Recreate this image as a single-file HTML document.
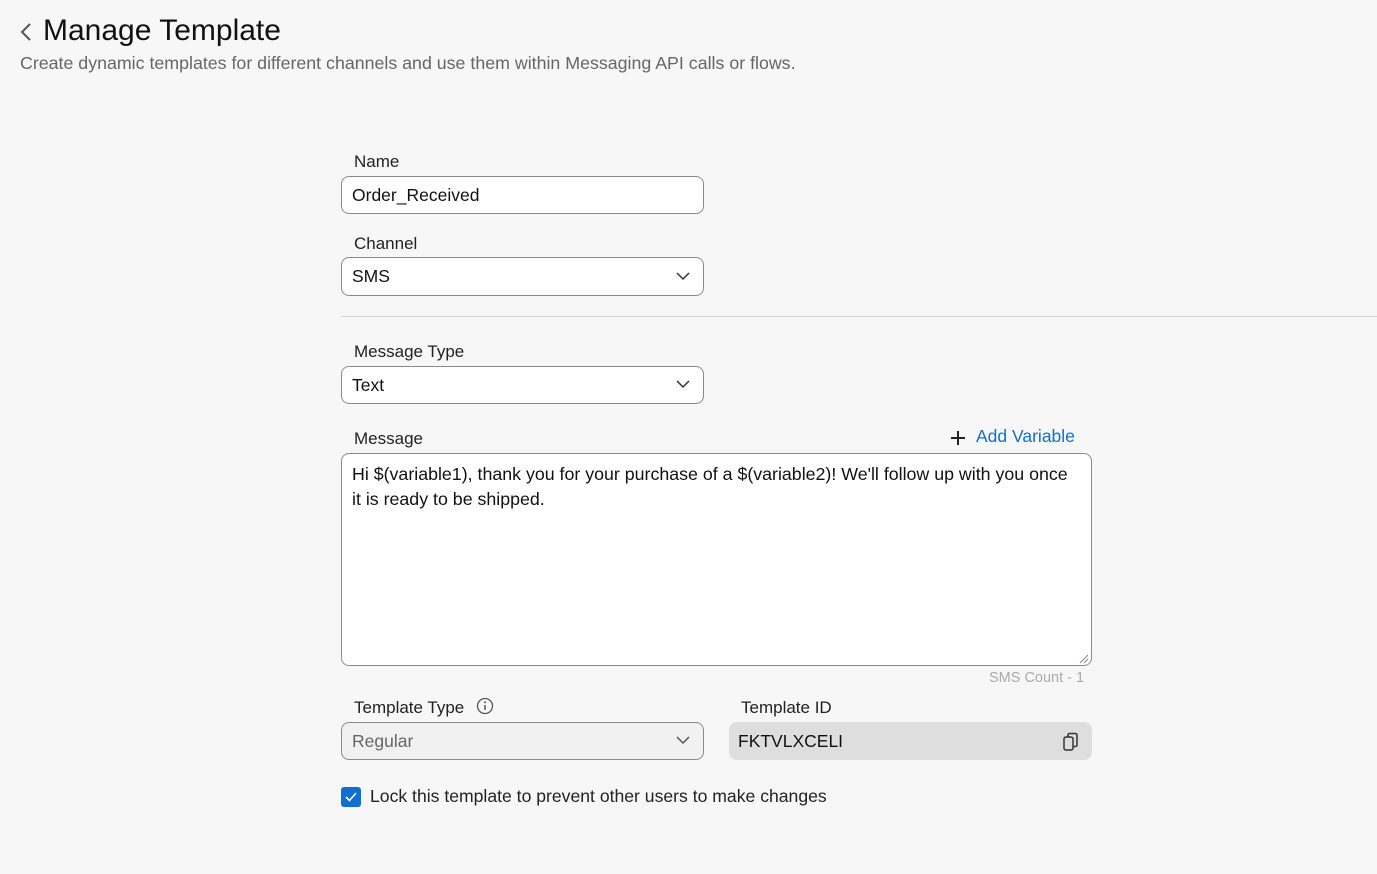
<!DOCTYPE html>
<html><head><style>
body{margin:0;width:1377px;height:874px;background:#f7f7f7;font-family:"Liberation Sans",sans-serif;color:#111;position:relative;overflow:hidden}
.a{position:absolute}
.lbl{font-size:17px;color:#222}
.box{position:absolute;box-sizing:border-box;border:1px solid #8a8a8a;border-radius:8px;background:#fff;font-size:17.5px;padding-left:10px;display:flex;align-items:center}
.chev{position:absolute;right:13px;top:50%;margin-top:-5px}
</style></head><body>
<svg class="a" style="left:19px;top:22px" width="14" height="20"><path d="M11 2L3 10l8 8" fill="none" stroke="#555" stroke-width="2"/></svg>
<div class="a" style="left:43px;top:14px;font-size:30px">Manage Template</div>
<div class="a" style="left:20px;top:53px;font-size:17.8px;color:#666">Create dynamic templates for different channels and use them within Messaging API calls or flows.</div>

<div class="a lbl" style="left:354px;top:152px">Name</div>
<div class="box" style="left:341px;top:176px;width:363px;height:38px">Order_Received</div>
<div class="a lbl" style="left:354px;top:234px">Channel</div>
<div class="box" style="left:341px;top:257px;width:363px;height:39px">SMS<svg class="chev" width="14" height="9"><path d="M1 1l6 6 6-6" fill="none" stroke="#333" stroke-width="1.5"/></svg></div>
<div class="a" style="left:341px;top:316px;width:1036px;height:1px;background:#d6d6d6"></div>
<div class="a lbl" style="left:354px;top:342px">Message Type</div>
<div class="box" style="left:341px;top:366px;width:363px;height:38px">Text<svg class="chev" width="14" height="9"><path d="M1 1l6 6 6-6" fill="none" stroke="#333" stroke-width="1.5"/></svg></div>
<div class="a lbl" style="left:354px;top:429px">Message</div>
<svg class="a" style="left:950px;top:430px" width="16" height="16"><path d="M8 1v14M1 8h14" stroke="#222" stroke-width="2"/></svg>
<div class="a" style="left:976px;top:426px;font-size:17.5px;color:#1170cf">Add Variable</div>
<div class="box" style="left:341px;top:453px;width:751px;height:213px;align-items:flex-start;padding:8px 10px;line-height:25px;font-size:17.8px">Hi $(variable1), thank you for your purchase of a $(variable2)! We'll follow up with you once it is ready to be shipped.</div>
<svg class="a" style="left:1079px;top:654px" width="10" height="10"><path d="M9 1L1 9M9 5L5 9" stroke="#888" stroke-width="1"/></svg>
<div class="a" style="left:989px;top:670px;font-size:14.5px;color:#aaa">SMS Count - 1</div>
<div class="a lbl" style="left:354px;top:698px">Template Type</div>
<svg class="a" style="left:476px;top:697px" width="18" height="18"><circle cx="9" cy="9" r="7.5" fill="none" stroke="#555" stroke-width="1.3"/><path d="M9 8v5" stroke="#555" stroke-width="1.5"/><circle cx="9" cy="5.3" r="1" fill="#555"/></svg>
<div class="box" style="left:341px;top:722px;width:363px;height:38px;background:#f1f1f1;color:#666">Regular<svg class="chev" width="14" height="9"><path d="M1 1l6 6 6-6" fill="none" stroke="#555" stroke-width="1.5"/></svg></div>
<div class="a lbl" style="left:741px;top:698px">Template ID</div>
<div class="box" style="left:729px;top:722px;width:363px;height:38px;background:#dedede;border:none;padding-left:9px">FKTVLXCELI</div>
<svg class="a" style="left:1061px;top:732px" width="20" height="20"><rect x="3" y="5" width="9" height="13" rx="2" fill="none" stroke="#333" stroke-width="1.5"/><path d="M7 5V3a1.5 1.5 0 0 1 1.5-1.5h6A1.5 1.5 0 0 1 16 3v10a1.5 1.5 0 0 1-1.5 1.5H12" fill="none" stroke="#333" stroke-width="1.5"/></svg>
<div class="a" style="left:341px;top:787px;width:20px;height:20px;background:#1170cf;border-radius:3px"></div>
<svg class="a" style="left:341px;top:787px" width="20" height="20"><path d="M5 10l3.5 3.5L15 6" fill="none" stroke="#fff" stroke-width="1.6"/></svg>
<div class="a" style="left:370px;top:786px;font-size:17.6px;color:#222">Lock this template to prevent other users to make changes</div>
</body></html>
